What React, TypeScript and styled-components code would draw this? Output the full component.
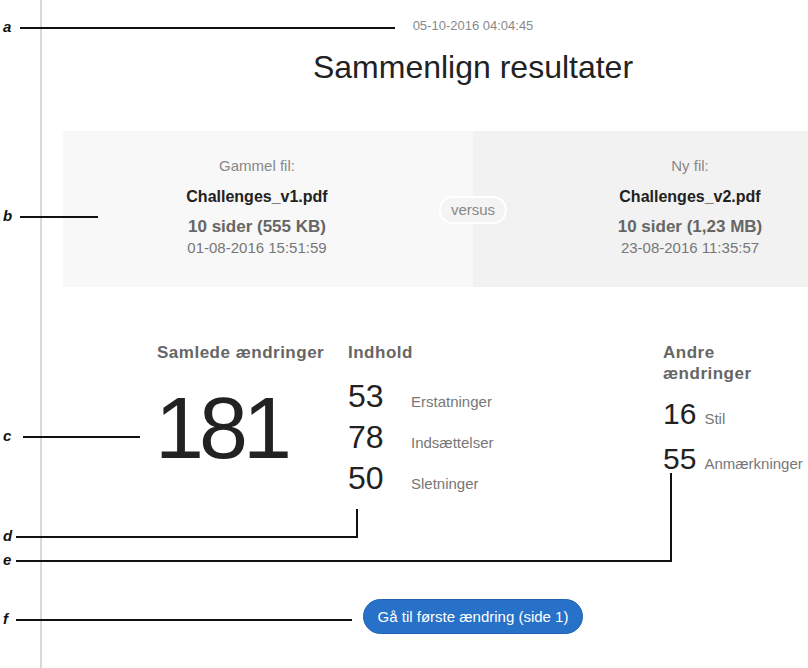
import React from "react"
import styled, { createGlobalStyle } from "styled-components"

const GlobalStyle = createGlobalStyle`
  html, body {
    margin: 0;
    padding: 0;
    background: #fff;
    overflow: hidden;
  }
  body {
    font-family: "Liberation Sans", Arial, sans-serif;
  }
`

type FileInfo = { label: string; name: string; size: string; date: string }

const files: FileInfo[] = [
  { label: "Gammel fil:", name: "Challenges_v1.pdf", size: "10 sider (555 KB)", date: "01-08-2016 15:51:59" },
  { label: "Ny fil:", name: "Challenges_v2.pdf", size: "10 sider (1,23 MB)", date: "23-08-2016 11:35:57" },
]

const contentStats = [
  { count: 53, label: "Erstatninger" },
  { count: 78, label: "Indsættelser" },
  { count: 50, label: "Sletninger" },
]

const otherStats = [
  { count: 16, label: "Stil" },
  { count: 55, label: "Anmærkninger" },
]

// annotation leaders drawn over the screenshot
const callouts = [
  { letter: "a", y: 28, from: 20, to: 395 },
  { letter: "b", y: 217, from: 20, to: 98 },
  { letter: "c", y: 437, from: 23, to: 140 },
  { letter: "d", y: 537, from: 16, to: 358, rise: 28 },
  { letter: "e", y: 561, from: 16, to: 672, rise: 88 },
  { letter: "f", y: 620, from: 16, to: 352 },
]

export default function App() {
  return (
    <>
      <GlobalStyle />
      <S.Page>
        <S.Gutter />
        <S.Content>
          <S.Timestamp>05-10-2016 04:04:45</S.Timestamp>
          <S.Title>Sammenlign resultater</S.Title>

          <S.Panel>
            {files.map((file, index) => (
              <S.Half key={file.name} $side={index === 0 ? "left" : "right"}>
                <S.FileLabel>{file.label}</S.FileLabel>
                <S.FileName>{file.name}</S.FileName>
                <S.FileSize>{file.size}</S.FileSize>
                <S.FileDate>{file.date}</S.FileDate>
              </S.Half>
            ))}
            <S.Versus>versus</S.Versus>
          </S.Panel>

          <S.Stats>
            <S.StatCol $width={191}>
              <S.Heading>Samlede ændringer</S.Heading>
              <S.Total>181</S.Total>
            </S.StatCol>

            <S.StatCol $width={315}>
              <S.Heading>Indhold</S.Heading>
              <S.Rows $gap={13}>
                {contentStats.map((row) => (
                  <S.Row key={row.label}>
                    <S.Count $size={32} $lh={41} $width={63}>
                      {row.count}
                    </S.Count>
                    <S.RowLabel>{row.label}</S.RowLabel>
                  </S.Row>
                ))}
              </S.Rows>
            </S.StatCol>

            <S.StatCol $width={150}>
              <S.Heading>
                Andre
                <br />
                ændringer
              </S.Heading>
              <S.Rows $gap={7}>
                {otherStats.map((row) => (
                  <S.Row key={row.label}>
                    <S.Count $size={30} $lh={45} $gapRight={8}>
                      {row.count}
                    </S.Count>
                    <S.RowLabel>{row.label}</S.RowLabel>
                  </S.Row>
                ))}
              </S.Rows>
            </S.StatCol>
          </S.Stats>

          <S.Button type="button">Gå til første ændring (side 1)</S.Button>
        </S.Content>

        <S.Annotations>
          {callouts.map((c) => (
            <React.Fragment key={c.letter}>
              <S.Letter $y={c.y}>{c.letter}</S.Letter>
              <S.Leader $y={c.y} $from={c.from} $to={c.to} />
              {c.rise ? <S.Riser $x={c.to} $y={c.y} $rise={c.rise} /> : null}
            </React.Fragment>
          ))}
        </S.Annotations>
      </S.Page>
    </>
  )
}

const S = {
  Page: styled.div`
    position: relative;
    display: flex;
    width: 808px;
    height: 668px;
    overflow: hidden;
  `,
  Gutter: styled.div`
    flex: 0 0 40px;
    border-right: 2px solid #d9d9d9;
  `,
  Content: styled.main`
    flex: 0 0 820px;
    padding-left: 21px;
    display: flex;
    flex-direction: column;
    align-items: center;
  `,
  Timestamp: styled.div`
    margin-top: 18px;
    font-size: 13px;
    line-height: 16px;
    color: #8a8a8a;
  `,
  Title: styled.h1`
    margin: 14px 0 0;
    font-size: 32px;
    line-height: 38px;
    font-weight: normal;
    color: #222;
  `,
  Panel: styled.section`
    position: relative;
    margin-top: 45px;
    width: 100%;
    display: grid;
    grid-template-columns: 1fr 1fr;
  `,
  Half: styled.div<{ $side: "left" | "right" }>`
    padding: 25px 0 29px;
    text-align: center;
    background: ${(p) => (p.$side === "left" ? "#f8f8f8" : "#f2f2f2")};
    ${(p) => (p.$side === "left" ? "padding-right: 22px;" : "padding-left: 24px;")}
  `,
  FileLabel: styled.div`
    font-size: 15px;
    line-height: 20px;
    color: #888;
  `,
  FileName: styled.div`
    margin-top: 11px;
    font-size: 16px;
    line-height: 20px;
    font-weight: bold;
    color: #222;
  `,
  FileSize: styled.div`
    margin-top: 10px;
    font-size: 17px;
    line-height: 20px;
    font-weight: bold;
    color: #666;
  `,
  FileDate: styled.div`
    margin-top: 1px;
    font-size: 15px;
    line-height: 20px;
    color: #777;
  `,
  Versus: styled.div`
    position: absolute;
    left: 50%;
    top: 65px;
    transform: translateX(-50%);
    height: 24px;
    padding: 0 10px;
    border: 2px solid #fff;
    border-radius: 14px;
    background: #f4f4f4;
    font-size: 15px;
    line-height: 24px;
    color: #888;
  `,
  Stats: styled.section`
    align-self: flex-start;
    margin: 55px 0 0 94px;
    display: flex;
    align-items: flex-start;
  `,
  StatCol: styled.div<{ $width: number }>`
    flex: 0 0 ${(p) => p.$width}px;
  `,
  Heading: styled.h2`
    margin: 0;
    font-size: 17px;
    line-height: 21px;
    font-weight: bold;
    letter-spacing: 0.5px;
    color: #666;
  `,
  Total: styled.div`
    margin: 21px 0 0 -2px;
    font-size: 88px;
    line-height: 88px;
    letter-spacing: -5px;
    color: #222;
  `,
  Rows: styled.div<{ $gap: number }>`
    margin-top: ${(p) => p.$gap}px;
    display: flex;
    flex-direction: column;
  `,
  Row: styled.div`
    display: flex;
    align-items: baseline;
  `,
  Count: styled.span<{ $size: number; $lh: number; $width?: number; $gapRight?: number }>`
    ${(p) => (p.$width ? `flex: 0 0 ${p.$width}px;` : "")}
    margin-right: ${(p) => p.$gapRight ?? 0}px;
    font-size: ${(p) => p.$size}px;
    line-height: ${(p) => p.$lh}px;
    color: #222;
  `,
  RowLabel: styled.span`
    font-size: 15px;
    line-height: 15px;
    color: #777;
  `,
  Button: styled.button`
    margin-top: 100px;
    height: 35px;
    padding: 0 14px;
    border: 1px solid #1f63b3;
    border-radius: 18px;
    background: #2871c8;
    color: #fff;
    font-family: "Liberation Sans", Arial, sans-serif;
    font-size: 15px;
    cursor: pointer;
  `,
  Annotations: styled.div`
    position: absolute;
    inset: 0;
    pointer-events: none;
  `,
  Letter: styled.span<{ $y: number }>`
    position: absolute;
    left: 3px;
    top: ${(p) => p.$y - 10}px;
    font-size: 15px;
    line-height: 18px;
    font-weight: bold;
    font-style: italic;
    color: #111;
  `,
  Leader: styled.div<{ $y: number; $from: number; $to: number }>`
    position: absolute;
    left: ${(p) => p.$from}px;
    top: ${(p) => p.$y - 1}px;
    width: ${(p) => p.$to - p.$from}px;
    height: 2px;
    background: #111;
  `,
  Riser: styled.div<{ $x: number; $y: number; $rise: number }>`
    position: absolute;
    left: ${(p) => p.$x - 2}px;
    top: ${(p) => p.$y - p.$rise}px;
    width: 2px;
    height: ${(p) => p.$rise + 1}px;
    background: #111;
  `,
}
